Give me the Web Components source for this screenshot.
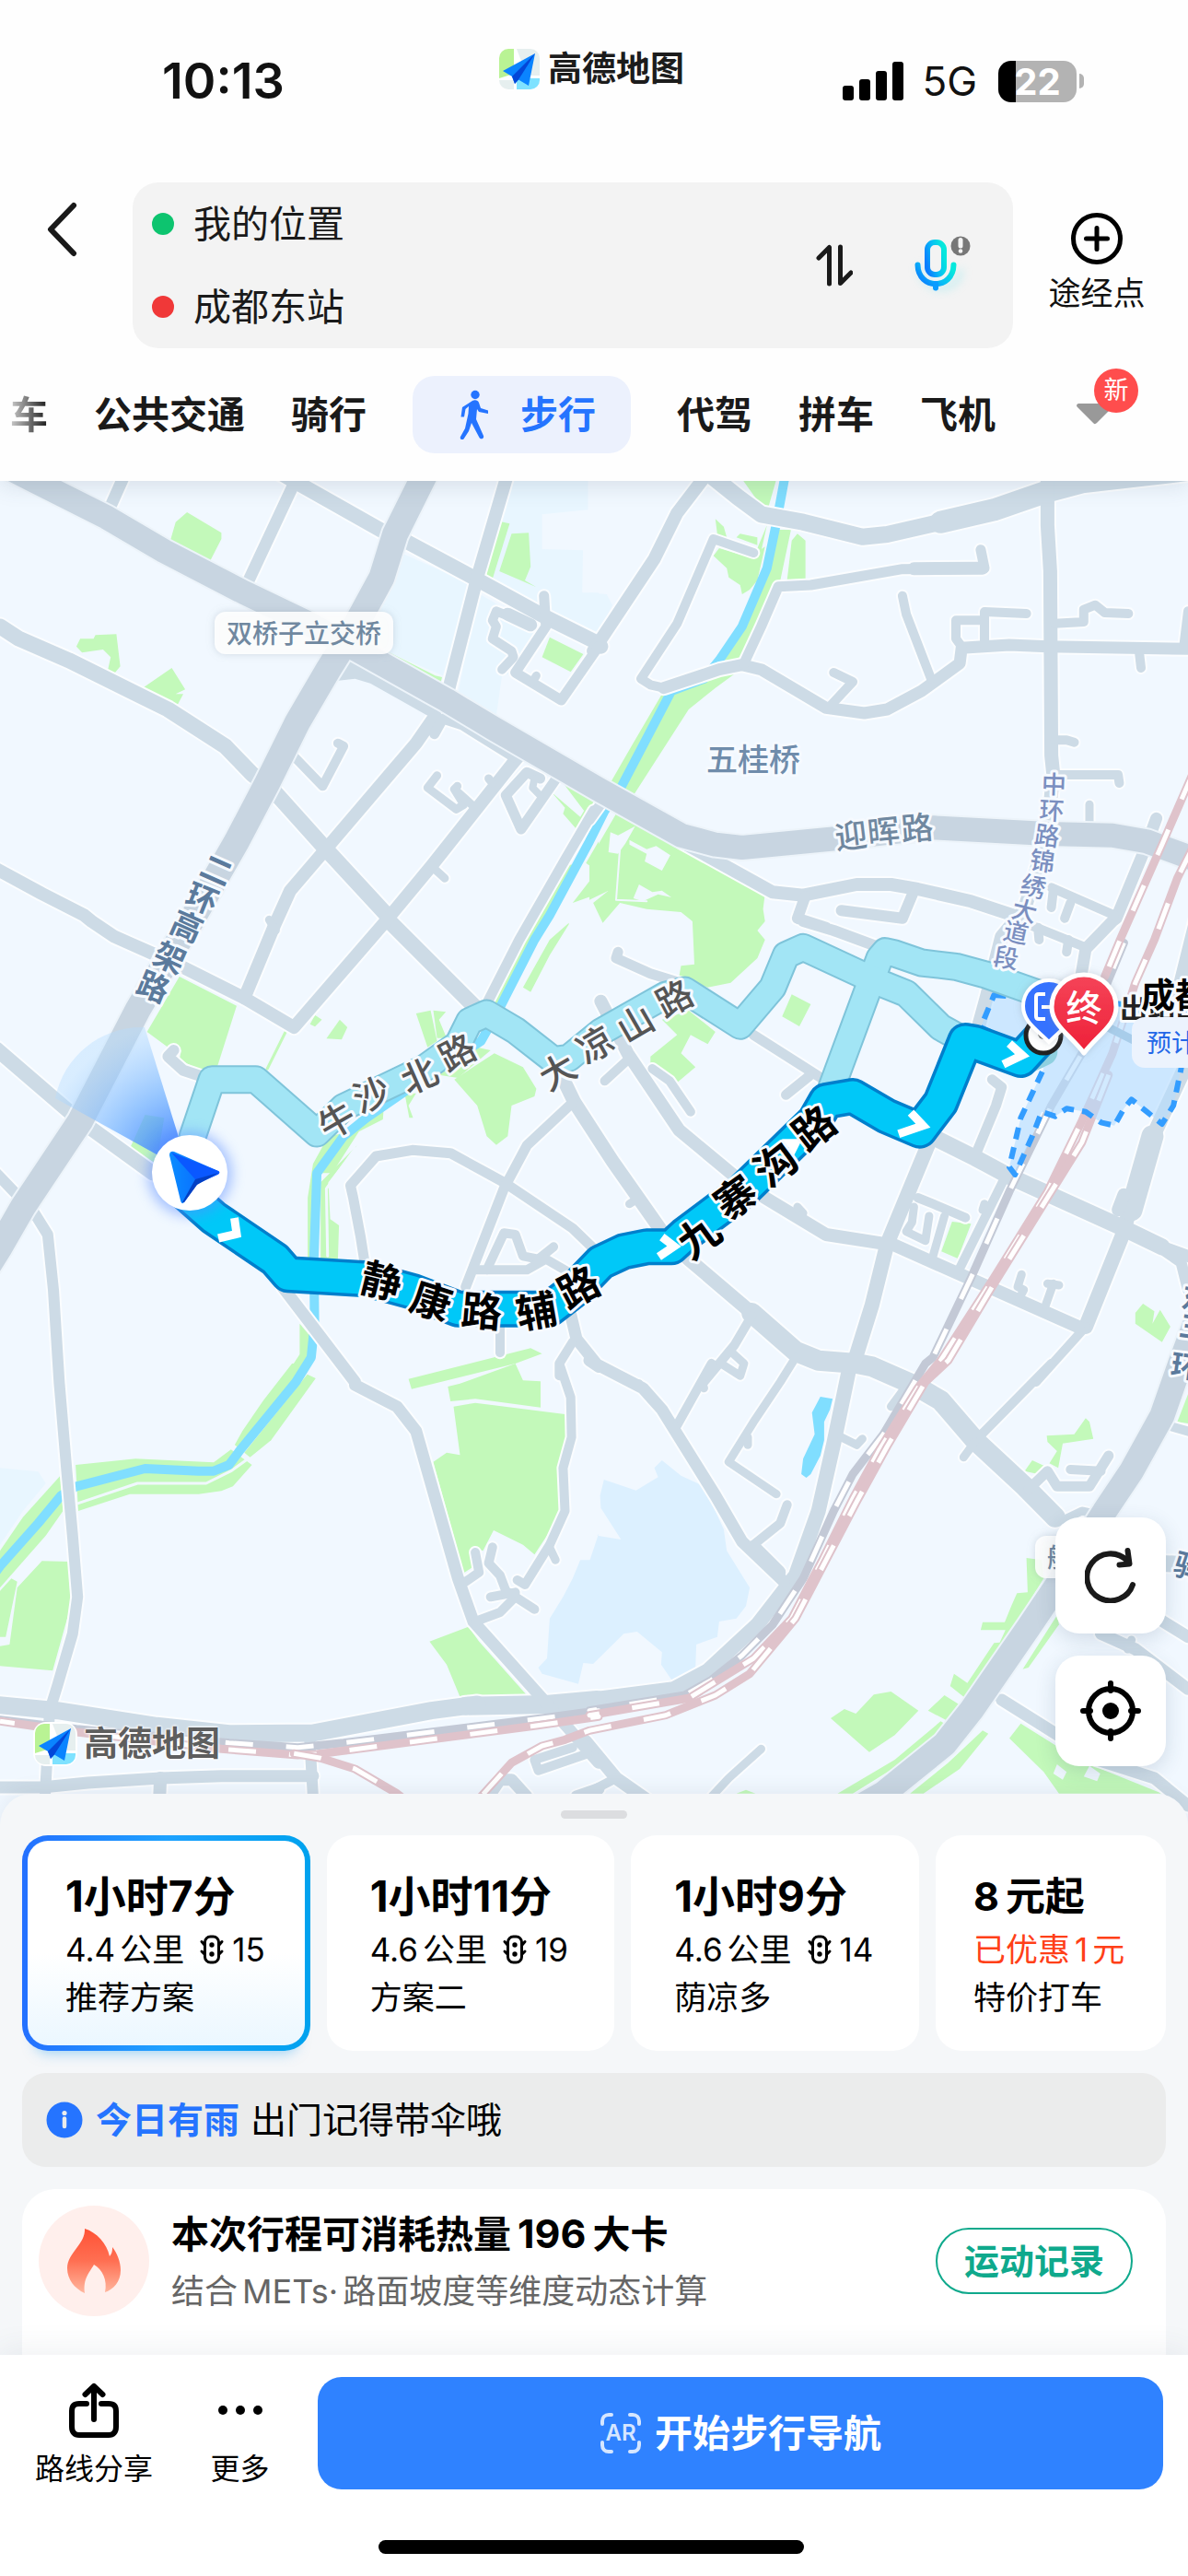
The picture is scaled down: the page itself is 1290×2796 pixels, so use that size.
<!DOCTYPE html>
<html lang="zh-CN">
<head>
<meta charset="utf-8">
<meta name="viewport" content="width=device-width, initial-scale=1">
<title>步行路线</title>
<style>
  html, body { margin: 0; }
  body {
    font-family: Inter, "Noto Sans CJK SC", sans-serif;
    color: #111;
    background: #fff;
  }
</style>
</head>
<body>
<route-page></route-page>

<script>
const BASE = `
  *, *::before, *::after { box-sizing: border-box; }
  button { font: inherit; color: inherit; background: none; border: 0; padding: 0; margin: 0; cursor: pointer; }
  svg { display: block; }
`;

class BaseElement extends HTMLElement {
  connectedCallback() {
    if (this.shadowRoot) return;
    const root = this.attachShadow({ mode: "open" });
    root.innerHTML = `<style>${BASE}${this.styles()}</style>${this.markup()}`;
  }
  styles() { return ":host{display:block}"; }
  markup() { return "<slot></slot>"; }
}

/* ---------- icons ---------- */
const ICONS = {
  back: [34, 60, `<path d="M30 4 5 30l25 26" fill="none" stroke="#1a1a1a" stroke-width="6" stroke-linecap="round" stroke-linejoin="round"/>`],
  swap: [40, 48, `<path d="M3 16 14.500 4.500V44M26.500 4v39.500L38 32" fill="none" stroke="#1a1a1a" stroke-width="5" stroke-linecap="round" stroke-linejoin="round"/>`],
  mic: [76, 76, `<defs><linearGradient id="m" x1="0" y1=".8" x2="1" y2=".3"><stop offset="0" stop-color="#0a7dff"/><stop offset=".5" stop-color="#08bdf5"/><stop offset="1" stop-color="#06e8dc"/></linearGradient>
      <filter id="b" x="-50%" y="-50%" width="200%" height="200%"><feGaussianBlur stdDeviation="5"/></filter></defs>
      <g fill="none" stroke="#9be8ee" stroke-width="6" opacity=".5" filter="url(#b)"><path d="M17 38c0 32 44 32 44 4"/></g>
      <g fill="none" stroke="url(#m)" stroke-width="6" stroke-linecap="round"><rect x="25" y="13" width="18" height="35" rx="8"/><path d="M14.500 37.500C15 65 53 65 53.500 37.500"/><path d="M34 58v4.500" stroke="#0a9cff"/></g>
      <circle cx="61" cy="17" r="10.500" fill="#777"/><path d="M61 10.500v6.500" stroke="#f3f3f3" stroke-width="5" stroke-linecap="round"/><circle cx="61" cy="22.500" r="2.300" fill="#f3f3f3"/>`],
  via: [56, 56, `<circle cx="28" cy="28" r="25.500" fill="none" stroke="#000" stroke-width="5"/><path d="M28 16.500v23M16.500 28h23" stroke="#000" stroke-width="5" stroke-linecap="round"/>`],
  walk: [34, 54, `<circle cx="18" cy="5.500" r="4.700" fill="#2574ff"/><path d="M15 12c3-1.500 6-.5 7 2l2 6 8 2.500v3.500l-10-2-2-3-1 11 8 18c1 3-3 4.500-4.500 2L14 36l-3 9-5.500 8.500C3.500 55.500 1 53.500 2 51l5-9 3.500-16 .500-8-3.500 3L6 29.500H2.500L4 19z" fill="#2574ff"/>`],
  caret: [42, 26, `<path d="M4 1h34c2.500 0 4 2 2 4L23 22c-1.500 1.500-3 1.500-4 0L2 5C0 3 1.500 1 4 1z" fill="#999"/>`],
  signal: [66, 42, `<rect x="0" y="26" width="12" height="16" rx="3"/><rect x="18" y="19" width="12" height="23" rx="3"/><rect x="36" y="10" width="12" height="32" rx="3"/><rect x="54" y="0" width="12" height="42" rx="3"/>`],
  light: [28, 32, `<rect x="6.500" y="2" width="15" height="28" rx="6" fill="none" stroke="#000" stroke-width="3"/><circle cx="14" cy="11" r="2.700"/><circle cx="14" cy="21" r="2.700"/><path d="M3 7.500 6 11M3 18 6 21M25 7.500 22 11M25 18 22 21" fill="none" stroke="#000" stroke-width="3" stroke-linecap="round"/>`],
  info: [40, 40, `<circle cx="20" cy="20" r="19.500" fill="#2574ff"/><circle cx="20" cy="12.500" r="2.600" fill="#ebecec"/><path d="M20 18.500v8.500" stroke="#ebecec" stroke-width="4.500" stroke-linecap="round"/>`],
  flame: [60, 72, `<defs><linearGradient id="f" x1="0" y1="0" x2="0" y2="1"><stop offset="0" stop-color="#ff5236"/><stop offset=".5" stop-color="#ff6f52"/><stop offset="1" stop-color="#ffb79f"/></linearGradient></defs><path d="M20 1c13 4 24 16 27 30 3-3 3-7 3-10 5 6 9 16 9 25 0 13-8 21-17 24 3-13-3-25-12-30-5 9-12 15-10 31C9 66 1 56 1 44 1 27 21 18 20 1z" fill="url(#f)"/>`],
  share: [56, 60, `<path d="M20 23h-8c-5 0-8 2-8 8v17c0 6 3 9 8 9h32c5 0 8-3 8-9V31c0-6-3-8-8-8h-8" fill="none" stroke="#000" stroke-width="6" stroke-linecap="round"/><path d="M28 40V5M18.500 13 28 4l9.500 9" fill="none" stroke="#000" stroke-width="6" stroke-linecap="round" stroke-linejoin="round"/>`],
  more: [52, 60, `<circle cx="7" cy="30" r="5"/><circle cx="26" cy="30" r="5"/><circle cx="45" cy="30" r="5"/>`],
  frame: [46, 46, `<path d="M3 13V10c0-4 3-7 7-7h3M33 3h3c4 0 7 3 7 7v3M43 33v3c0 4-3 7-7 7h-3M13 43h-3c-4 0-7-3-7-7v-3" fill="none" stroke="#d5e6ff" stroke-width="4" stroke-linecap="round"/>`],
  refresh: [56, 60, `<path d="M52 40A25.500 25.500 0 1 1 46 14" fill="none" stroke="#1a1a1a" stroke-width="6" stroke-linecap="round"/><path d="M46.500 3l2 14.500-11 1" fill="none" stroke="#1a1a1a" stroke-width="6" stroke-linecap="round" stroke-linejoin="round"/>`],
  locate: [68, 68, `<circle cx="34" cy="34" r="24" fill="none" stroke="#000" stroke-width="6"/><circle cx="34" cy="34" r="9"/><path d="M34 4v8M34 56v8M4 34h8M56 34h8" stroke="#000" stroke-width="6" stroke-linecap="round"/>`],
  brand: [44, 44, `<clipPath id="c"><rect width="44" height="44" rx="10"/></clipPath><g clip-path="url(#c)"><rect width="44" height="44" fill="#fff"/><path d="M0 0h16v27L0 32z" fill="#b9f394"/><path d="M19 0h25v29H30zM0 34h16v10H0z" fill="#e6efef"/><path d="M19 32h25v12H19z" fill="#7fe2ff"/></g><path d="M39 5 4 24l10 6 3 8 4-4.500L32 40z" fill="#0a84ff"/><path d="M39 5 14 30l3 8 4-4.500z" fill="#0347d8"/>`]
};

class UiIcon extends BaseElement {
  styles() { return ":host{display:block;flex:none}"; }
  markup() {
    const [w, h, body] = ICONS[this.getAttribute("name")];
    return `<svg width="${w}" height="${h}" viewBox="0 0 ${w} ${h}" aria-hidden="true">${body}</svg>`;
  }
}

class BrandLogo extends BaseElement {
  styles() {
    return `:host{display:flex;align-items:center;gap:9px;font-size:37px;line-height:44px;font-weight:700;color:#1c1c1c;white-space:nowrap}
      :host([muted]){color:#5e5e5e;text-shadow:0 0 3px #fff,0 0 3px #fff,0 0 3px #fff}
      :host([muted]) ui-icon{border-radius:12px;box-shadow:0 0 0 2px #fff}`;
  }
  markup() { return `<ui-icon name="brand"></ui-icon><span>高德地图</span>`; }
}

/* ---------- header ---------- */
class StatusBar extends BaseElement {
  styles() {
    return `:host{display:grid;grid-template-columns:1fr auto 1fr;align-items:center;height:70px;padding:0 113px 0 176px}
      time{font-size:54px;line-height:60px;font-weight:600}
      brand-logo{align-self:start;grid-column:2;margin-left:-68px}
      .right{display:flex;align-items:center;justify-content:flex-end;gap:23px}
      .right ui-icon{margin-right:-3px}
      .net{font-size:44px;line-height:60px}
      .cell{display:flex;align-items:center;gap:3px}
      .battery{width:85px;height:45px;border-radius:14px;background:linear-gradient(90deg,#000 19px,#b3b3b3 19px);color:#fff;font-size:40px;line-height:45px;font-weight:700;text-align:center}
      .nub{width:5px;height:16px;border-radius:0 5px 5px 0;background:#b3b3b3}`;
  }
  markup() {
    return `<time>10:13</time><brand-logo></brand-logo>
      <div class="right"><ui-icon name="signal"></ui-icon><span class="net">5G</span>
      <div class="cell"><div class="battery">22</div><div class="nub"></div></div></div>`;
  }
}

class SearchPanel extends BaseElement {
  styles() {
    return `:host{display:flex;align-items:flex-start}
      .back{width:144px;height:102px;padding-left:50px;display:flex;align-items:center;flex:none}
      .box{flex:1;min-width:0;height:180px;border-radius:28px;background:#f3f3f3;display:flex;align-items:center;padding:0 42px 0 21px}
      .rows{flex:1;min-width:0}
      label{display:flex;align-items:center;height:90px;gap:21px}
      i{width:24px;height:24px;border-radius:50%;background:#0dc46f;flex:none}
      i.end{background:#f03838}
      input{flex:1;min-width:0;border:0;background:none;padding:0;font:inherit;font-size:41px;line-height:60px;color:#1a1a1a;outline:0}
      .tools{display:flex;align-items:center;gap:56px}
      .via{width:190px;padding-right:8px;margin-top:33px;display:flex;flex-direction:column;align-items:center;gap:9px;font-size:35px;line-height:44px;flex:none}`;
  }
  markup() {
    return `<button class="back" aria-label="返回"><ui-icon name="back"></ui-icon></button>
      <div class="box"><div class="rows">
        <label><i></i><input aria-label="起点" value="我的位置"></label>
        <label><i class="end"></i><input aria-label="终点" value="成都东站"></label></div>
        <div class="tools"><button aria-label="交换起终点"><ui-icon name="swap"></ui-icon></button>
        <button aria-label="语音"><ui-icon name="mic"></ui-icon></button></div></div>
      <button class="via"><ui-icon name="via"></ui-icon><span>途经点</span></button>`;
  }
}

class ModeTab extends BaseElement {
  styles() {
    return `:host{display:block;flex:none}
      button{display:flex;align-items:center;height:84px;font-size:41px;line-height:60px;font-weight:600;color:#1a1a1a;white-space:nowrap}
      :host([cut]) button{background:linear-gradient(90deg,#ccc,#1a1a1a);background-clip:text;-webkit-background-clip:text;color:transparent}
      :host([active]) button{color:#2574ff;background:#ecf1fd;border-radius:24px;padding:0 38px 0 50px;gap:33px}`;
  }
  markup() {
    return `<button>${this.hasAttribute("active") ? '<ui-icon name="walk"></ui-icon>' : ""}<slot></slot></button>`;
  }
}

class ModeTabs extends BaseElement {
  styles() {
    return `:host{display:flex;align-items:center;justify-content:space-between;padding:0 58px 0 11px}
      nav{display:flex;gap:50px;min-width:0}
      .more{position:relative;width:64px;height:84px;display:flex;align-items:center;flex:none}
      .badge{position:absolute;left:20px;top:-8px;width:48px;height:48px;border-radius:50%;background:#ff4d4d;color:#fff;font-size:27px;line-height:48px;text-align:center}`;
  }
  markup() {
    return `<nav><mode-tab cut>车</mode-tab><mode-tab>公共交通</mode-tab><mode-tab>骑行</mode-tab><mode-tab active>步行</mode-tab><mode-tab>代驾</mode-tab><mode-tab>拼车</mode-tab><mode-tab>飞机</mode-tab></nav>
      <button class="more" aria-label="更多方式"><ui-icon name="caret"></ui-icon><span class="badge">新</span></button>`;
  }
}

class RouteHeader extends BaseElement {
  styles() {
    return `:host{display:block;position:relative;z-index:1;padding:53px 0 30px;background:#fefefe;box-shadow:0 4px 24px rgba(60,80,100,.16)}
      search-panel{margin-top:75px} mode-tabs{margin-top:30px}`;
  }
  markup() { return `<status-bar></status-bar><search-panel></search-panel><mode-tabs></mode-tabs>`; }
}

/* ---------- map ---------- */
/* Geometry is stored in tile units; a letter in a point list switches the tile. */
const TILES = { A: [0, 520], B: [640, 520], C: [0, 1000], D: [640, 1000], E: [0, 1480], F: [640, 1480] };
const UX = 650 / 1568, UY = 1 / 3;
function points(list) {
  let tile = TILES.A, x = null; const out = [];
  for (const t of list.trim().split(/[\s,]+/)) {
    if (TILES[t]) { tile = TILES[t]; continue; }
    if (x === null) x = +t;
    else { out.push([tile[0] + x * UX, tile[1] + t * UY]); x = null; }
  }
  return out;
}
const d = list => "M" + points(list).map(p => p.map(n => n.toFixed(1)).join(" ")).join("L");

const ROADS = [
  [17, "A 0 480 50 520 180 590 440 750 590 870 660 960 720 1020 850 1200 1010 1415 C 1020 0 1245 280"],
  [14, "A -20 1262 110 1350 220 1420 C 240 0 300 50 400 105 480 150 640 250 770 345 1010 0 A 1130 1260 1340 930 1360 900"],
  [14, "C 640 250 720 10 A 760 1340 850 1210 1090 860 1140 770"],
  [9, "A 705 1435 722 1470"],
  [13, "A 325 -10 280 115"], [13, "A 772 10 640 360"],
  [16, "A 720 -30 790 20 1010 175 1060 200 1240 320 1430 450 1568 535 B 30 545"],
  [14, "A 1328 -10 1250 320 1170 710"],
  [14, "B 310 -20 230 110 170 260 10 560"],
  [11, "A 1425 380 1430 480 1350 630 1470 720 1568 545"],
  [9, "A 1405 640 1395 660"],
  [10, "A 1330 445 1300 430 1290 460 1300 480 1290 520 1340 560 1345 580 1315 620"],
  [14, "A 1330 440 1390 475"],
  [10, "A 760 890 845 1000 900 870 885 860"],
  [9, "A 1145 965 1120 1005 1195 1075 1215 1060 1190 1010 1198 1000"], [9, "A 1200 1020 1240 1065"],
  [11, "A 1415 975 1380 955 1325 1030 1365 1140 1460 970"], [8, "A 1400 975 1395 1005 1415 1030"],
  [9, "A 1130 1260 1165 1300"], [9, "A 1280 975 1290 990"],
  [11, "A 1138 830 1160 780 1210 800 1345 905"],
  [11, "B 40 1040 0 1110 A 1555 1080 1480 1240 1360 1500 C 1270 280"],
  [18, "B 310 -20 390 60 450 115 560 140 715 188 780 180 920 140"],
  [24, "B 920 140 1060 100 1200 40 1290 10 1568 -30"],
  [15, "B 1200 0 1200 150 1207 300 1210 900 1215 960 1200 1150 1140 1400 D 1080 50 1040 250 1020 340"],
  [10, "B 430 240 325 195 230 470 135 650 160 670 195 680"],
  [13, "B 195 680 340 620 400 605 450 620 620 745 720 762 780 750 870 690 970 600 975 550 1100 540 1200 545 1568 553"],
  [10, "B 1556 553 1568 430"],
  [11, "B 405 600 450 480 495 350 580 345 820 293 1035 290 1025 230"], [14, "B 850 292 1030 290"],
  [10, "B 820 380 830 440 895 650"], [10, "B 640 630 690 660 630 740"],
  [10, "B 975 545 960 520 960 460 1035 460 1035 540"], [10, "B 1035 460 1035 432 1145 438"],
  [10, "B 1220 470 1295 465 1295 425 1325 410 1350 435 1412 438"],
  [10, "B 1440 560 1445 615"], [10, "B 1220 850 1250 850 1270 857"],
  [10, "B 1230 963 1385 963 1388 990"], [9, "B 1310 1060 1310 1130"],
  [13, "B 1485 1105 1460 1190 1380 1430 D 1370 0 1300 90 1285 200"],
  [14, "B 240 1180 480 1345 560 1355 700 1320 790 1320 860 1335 1000 1375 1110 1420"],
  [12, "B 850 1340 820 1430 660 1405"],
  [12, "B 565 1360 545 1430 620 1460 D 560 0 640 30 760 85"],
  [10, "B 1210 1330 1375 1420"], [10, "B 1260 1380 1245 1430"], [10, "B 1215 1340 1210 1395"],
  [10, "D 1160 15 1300 85"], [10, "D 1175 20 1178 60"], [10, "D 1255 60 1250 100"],
  [16, "D 1590 0 1540 250 1570 450 1480 690 1410 960 1400 1010 1300 1320"],
  [24, "D 1475 700 1420 940"], [14, "D 1400 890 1385 940"],
  [10, "D 1300 1320 1170 1500 F 1210 0 1020 240"],
  [18, "D 880 690 1010 770 1100 830 1400 1000 1500 1060"], [13, "D 1500 1060 1590 1100"],
  [12, "D 1480 1050 1550 1110 1568 1200"],
  [16, "D 890 720 780 1050 740 1250 690 1450 F 680 20 640 260 600 480 540 690 440 850 310 1000 220 1060 0 1095"],
  [20, "F 20 1095 E 1430 1110 1220 1115"],
  [19, "E 1250 1110 1130 1130 820 1203 600 1205 410 1180 150 1130 -20 1110"],
  [10, "D 1090 830 970 1130"], [9, "D 1035 920 1030 940"],
  [11, "D 430 370 620 520"], [11, "D 575 505 515 565"], [9, "D 545 930 560 950"],
  [14, "D 30 260 100 430 235 680 390 840 460 900 620 1020 800 1055 1280 1320"],
  [10, "D 110 440 40 520"], [10, "D 165 480 210 520 265 620"], [9, "D 105 920 130 900"],
  [15, "C 1470 500 1505 590 D 60 780 190 1010 260 1100 430 1280"],
  [22, "D 425 1275 540 1400 600 1430 700 1440 F 740 10 850 70 920 120 1010 250 1140 400 1220 500"],
  [10, "D 860 900 900 920 985 965"], [9, "D 850 930 845 980 830 1010 880 1040 890 960"], [9, "D 930 960 900 1090"],
  [11, "D 1055 515 1080 540 1065 600 1015 750"],
  [9, "D 1132 1150 1122 1190 1138 1200 1125 1230"], [9, "D 1200 1180 1230 1185"], [9, "D 1215 1180 1195 1250"],
  [11, "D 75 100 70 120 160 170 250 205"],
  [10, "D 425 1285 380 1380 300 1500 F 320 0 230 200"], [9, "D 370 1400 405 1440 395 1480 345 1440"],
  [9, "D 540 1420 500 1500 F 430 190 365 320 490 425"], [9, "F 415 240 415 265"], [9, "F 130 65 135 80"], [9, "F 300 80 295 60"],
  [13, "C 1495 1280 1510 1360 1568 1450 F 0 -10 140 80 190 150 230 230 330 430 400 580 510 710"],
  [10, "F 518 460 500 520 430 590"], [16, "F 430 600 495 680"],
  [9, "F 820 90 790 140"], [9, "F 660 240 700 265 715 245"], [9, "F 1010 255 980 305"],
  [11, "F 1150 410 1200 350 1225 400 1310 400 1360 300"], [10, "F 1260 345 1340 350"],
  [13, "F 1340 880 1430 930 1568 1060"], [9, "F 1420 900 1410 930"], [13, "F 1490 830 1568 890"],
  [13, "F 1080 1095 1330 1290 1480 1350 1568 1440"], [10, "F 1510 200 1580 225"],
  [9, "F 1240 510 1290 480 1330 490"], [18, "F 1490 650 1568 655"],
  [9, "F 450 1255 365 1350 320 1410"], [14, "F -10 1230 70 1350 150 1420"], [10, "F 70 1350 0 1395"],
  [12, "C -10 820 90 950 125 1020 140 1200 155 1500 E 175 350 190 560 203 760 190 880 150 1050 130 1130 118 1410"],
  [16, "C -10 415 200 640 400 820"],
  [13, "C 740 1190 930 1500 E 930 70 1040 140 1090 220 1200 700 1240 840 1420 1090 1568 1300"],
  [11, "C 955 1110 945 1030 925 900 918 860 985 765 1080 745 1180 755 1320 850 1500 1000 1550 1060"],
  [11, "C 1500 590 1380 730 1320 870 1220 1190"],
  [10, "C 1275 1135 1320 1015 1350 1020 1370 1090 1410 1100 1450 1060"],
  [10, "C 1240 1135 1380 1135 1430 1100 1500 1150"],
  [10, "C 1310 1310 1310 1405"],
  [10, "C 1500 1370 1465 1440 1465 1480 E 1465 0 1495 110 1497 240 1475 340 1480 480 1440 590 1375 720 1355 705"],
  [9, "E 1440 600 1455 640"],
  [12, "C 455 420 440 440 480 485 540 510"],
  [10, "E 1220 710 1255 680 1245 615"], [10, "E 1245 840 1310 810 1350 760 1325 740 1310 690 1280 650 1290 598"],
  [10, "E 1350 760 1400 800"], [10, "E 1285 760 1350 745"],
  [13, "E -10 1380 110 1380 230 1365 420 1350 580 1343 820 1343"], [12, "E 810 1200 820 1410"], [14, "E 420 1350 418 1410"],
  [10, "E 1500 1250 1400 1290 1410 1325 1540 1270"], [13, "E 1280 1410 1310 1355 1340 1355 1380 1410"], [13, "E 1510 1410 1568 1385"]
];
const MAJOR = [
  [26, "A -60 -90 80 0 280 125 430 235 640 370 800 465 940 560 1170 720 1290 810 1568 1010 B 240 1160 330 1190 400 1200 650 1170 900 1135 1200 1155 1370 1160 1460 1180 1590 1240"],
  [28, "A 1115 -20 1035 180 1000 320 930 480 860 620 780 790 700 990 620 1180 500 1440 C 450 100 360 290 210 650 60 930 0 1060 -40 1140"],
  [27, "D 1590 1300 F 1548 0 1500 170 1420 350 1350 480 1280 620 1150 860 1000 1130 930 1240 770 1400 700 1450"]
];
const ZONES = [
  "A 1340 0 1540 0 1540 100 1420 115 1420 228 1527 232 1525 370 1568 370 1568 520 1250 310",
  "A 1050 240 1230 340 1160 640 1010 560 960 440", "A 1250 370 1430 500 1350 630 1315 640 1300 770 1200 700",
  "B 0 370 45 375 60 410 20 510 0 500", "E 0 340 100 352 120 390 60 480 0 590"
];
const LAKES = ["F 190 315 240 365 300 400 352 540 360 610 420 730 410 790 385 830 340 840 335 890 280 915 278 990 218 1035 188 980 190 940 125 873 90 880 10 978 E 1528 975 1515 1043 1420 1010 1410 990 1433 960 1440 830 1475 760 1500 700 1520 640 1545 640 1568 555 F 20 560 83 573 30 470 28 430 38 378 122 413 180 370 170 340"];
const POND = "F 605 108 637 115 630 150 615 190 615 250 605 300 580 360 568 372 555 360 560 310 590 230 583 160";
const GREENS = [
  "A 460 140 490 108 580 175 580 195 545 280 520 260 445 205", "A 200 545 210 520 245 520 250 508 305 505 315 610 298 635 282 625 290 580 270 555 215 565",
  "A 450 615 485 685 460 700 480 700 465 735 440 720 372 682", "A 1310 138 1335 145 1290 325 1272 315", "A 1340 178 1385 175 1390 285 1375 330 1405 352 1308 300",
  "A 1005 555 1140 640 1158 645 1150 685 1025 600", "A 1440 515 1528 570 1495 628 1420 580", "A 1470 982 1555 1040 1510 1140 1475 1090 1480 1070 1445 1020 1520 1100 1530 1080",
  "A 1480 1260 1500 1255 1395 1500 1375 1500", "C 1400 0 1420 0 1310 270 1290 270", "A 1568 1180 1535 1250 1568 1280", "A 1550 1300 1500 1380 1568 1350",
  "A 1490 1445 1440 1500 C 1440 60 1370 215 1390 230 1440 110 1490 10",
  "B 400 0 490 0 468 95 440 70", "B 330 130 352 155 360 190 335 180", "B 385 190 395 178 440 190 440 215",
  "B 465 150 440 225 450 235", "B 325 250 340 225 420 255 460 220 440 330 420 360 400 375 395 345 365 320 360 290",
  "B 490 165 528 165 500 330 480 350 400 590 340 590 440 390", "B 545 178 566 200 566 325 518 328 530 200",
  "B 385 630 330 680 260 750 110 1040 50 1000 110 870 190 700 290 660", "B 0 1040 15 1040 0 1080",
  "B 70 1090 100 1105 130 1130 300 1240 460 1350 455 1400 460 1440 440 1470 D 460 60 440 120 370 200 310 215 235 180 240 145 275 140 270 0 B 270 1440 240 1410 150 1400 80 1380 35 1445 10 1380 50 1340 0 1370 0 1240",
  "C 470 180 620 275 570 470 530 490 470 450 475 420 440 410 385 360", "C 380 630 430 640 410 790 340 740", "C 825 305 843 320 825 343 812 335", "C 890 320 910 345 895 385 855 382",
  "C 1090 300 1128 290 1145 390 1120 410", "C 1135 290 1168 295 1150 320 1170 380 1145 380",
  "C 1295 430 1370 475 1405 545 1400 570 1340 600 1330 700 1300 728 1275 700 1250 600 1190 515", "C 1150 500 1250 410 1285 420 1200 510",
  "C 940 640 1005 610 1003 645 940 685 870 820 840 820", "C 935 730 860 850 865 970 888 990 885 1100 840 1100 840 850", "C 860 700 900 690 835 810 820 1100 806 1100 806 900 820 790",
  "C 1060 560 1090 560 1070 600 1082 640 1072 640", "C 785 1310 812 1350 812 1420 760 1500 738 1500 785 1410",
  "D 190 320 260 290 330 360 310 400 265 370 240 430 278 475 230 525 160 480 160 440 230 370", "D 530 238 580 270 550 342 505 310", "D 950 978 1000 985 965 1098 922 1075",
  "D 1450 1245 1480 1270 1475 1310 1495 1265 1522 1320 1500 1370 1430 1310 1430 1275",
  "E 765 0 800 0 630 280 615 265 635 220 690 120", "E 805 35 827 48 710 250 655 305 640 290", "E 198 330 355 310 560 322 605 280 660 330 610 400 580 415 520 425 340 425 205 480",
  "E 158 365 165 480 120 560 0 730 0 610 60 500", "E 110 643 180 645 185 790 138 1000 0 985 0 920 25 915 45 730", "E 0 740 30 700 45 710 15 890 0 890",
  "C 1070 1490 1390 1390 1420 1408 1350 1440 E 1078 83", "E 1173 75 1205 65 1350 0 1370 55 1416 58 1416 143 1245 115 1180 123",
  "E 1188 140 1245 128 1480 165 1485 240 1463 350 1470 490 1400 622 1370 590 1293 543 1265 610 1245 600 1235 665 1215 682 1135 320 1170 290 1205 298",
  "E 1227 857 1255 905 1380 1080 1208 1095 1170 980 1125 905",
  "F 1300 178 1310 190 1320 245 1240 260 1228 340 1205 325 1225 285 1200 255 1198 235 1270 230", "F 1160 315 1195 335 1175 360 1140 350", "F 1130 365 1160 385 1150 395",
  "F 1145 633 1185 640 1190 700 1145 790 1000 1080 985 1090 945 1050 955 1010 990 1040 1060 910 1075 908 1090 868 1025 868 1030 842 1088 842 1105 790 1120 748 1148 745",
  "F 790 1068 862 1130 800 1210 733 1265 632 1155 668 1125 698 1140 745 1078", "F 930 1080 975 1115 940 1165 887 1130",
  "F 920 1165 940 1180 820 1300 690 1400 650 1400 800 1290", "F 1030 1195 1045 1205 970 1320 875 1400 840 1400 940 1300",
  "F 1130 1172 1230 1250 1340 1320 1500 1400 1230 1400 1190 1330 1100 1220", "F 1225 820 1230 850 1150 990 1135 995", "F 1568 100 1540 190 1568 195", "F 385 1400 410 1388 435 1400"
];
const CLEARINGS = ["B 175 1195 212 1225 190 1275 145 1245 150 1220 105 1190 105 1175 150 1205", "B 55 1150 75 1160 120 1130 95 1185 75 1220 50 1215", "B 130 1320 165 1345 190 1340 215 1362 180 1352 140 1375 115 1365", "F 1225 1305 1250 1330 1240 1355 1215 1335", "F 1310 1310 1338 1335 1330 1360 1295 1345"];
const RIVER = "B 514 -20 487 160 465 290 400 480 340 590 300 650 215 690 80 1010 40 1080 0 1180 A 1440 1420 1400 1500 C 1310 280 1260 390 1100 520 960 640 900 700 830 820 822 1100 824 1310 815 1420 775 1500 E 630 280 600 330 560 350 520 350 380 342 200 400 160 430 100 520 0 660 -30 710";
const RAILS = [
  ["#c3c9d6", "#fff", "D 1400 70 1350 220 1290 430 1210 600 1100 880 1000 1160 900 1420 F 880 0 770 230 690 360 640 480 560 700 480 850 400 950 320 1030 250 1080 0 1130 E 1568 1130 1420 1155 900 1235 780 1250 600 1235 200 1190 0 1160"],
  ["#dfc3cb", "#fff", "B 1580 960 1500 1190 1390 1500 D 1350 180"],
  ["#dfc3cb", "#fff", "B 1580 1200 1540 1300 1480 1500 D 1430 200 1370 430 1290 650 1200 880 1060 1160 920 1430 F 860 80 760 280 690 440 610 640 530 830 430 960 260 1090 0 1145 E 1568 1150 1400 1180 830 1272 780 1275 580 1255 200 1200 0 1165"],
  ["#dfc3cb", "#fff", "D 1360 500 1290 720 1200 900 1060 1180 940 1430 F 880 60 780 270 700 450 620 640 540 830 420 1010 330 1080 200 1145 0 1195 E 1480 1225 1420 1245 1340 1300 1260 1410"],
  ["#dfc3cb", "#fff", "E 770 1270 840 1285 930 1320 1040 1400 1060 1420"]
];
const STATION = "D 1060 240 1170 250 1400 270 1440 290 1568 300 1550 480 1530 600 1500 660 1460 620 1420 580 1400 610 1375 665 1340 655 1300 620 1250 610 1220 635 1185 620 1160 700 1115 825 1100 800 1130 640 1190 480 1150 420 1025 345";
const ALTS = [
  "D 635 540 760 120 775 98 800 105 870 135 960 148 1040 175 1200 245",
  "C 505 700 555 515 670 515 830 690 900 605 1110 480 1200 400 1230 325 1275 300 1350 355 1450 452 1490 445 D 30 360 200 240 250 225 395 340 480 215 515 110 560 85 760 200 830 235 920 345 1000 400"
];
const ROUTE = "C 455 850 560 965 720 1100 755 1150 960 1165 1080 1205 1200 1262 1440 1262 1500 1205 D 30 1110 90 1075 150 1060 215 1060 250 1020 400 880 590 650 620 585 690 570 780 635 865 680 920 590 985 390 1010 395 1130 450 1185 375";
const ARROWS = ["C 614 966 620 1018 572 1032", "D 190 1028 222 1058 182 1092", "D 1100 398 1134 436 1084 466", "D 842 623 874 665 810 692", "D 505 722 540 722 525 760"];
/* label: font size, colour, weight, text, then centre x, y (tile units) and angle per glyph */
const LABELS = [
  [34, "#5b7a9c", 600, "二环高架路", [["A", 568, 1272, 24], ["A", 530, 1365, 22], ["A", 490, 1455, 24], ["C", 445, 118, 24], ["C", 402, 212, 22]]],
  [35, "#7088a0", 500, "迎晖路", [["B", 685, 1160, -7], ["B", 770, 1146, -6], ["B", 858, 1135, -5]]],
  [27, "#7b8fc0", 500, "中环路锦绣大道段", [["B", 1217, 993, 2], ["B", 1211, 1078, 3], ["B", 1199, 1160, 8], ["B", 1187, 1243, 8], ["B", 1163, 1325, 14], ["B", 1140, 1405, 14], ["B", 1118, 1475, 12], ["D", 1092, 118, 10]]],
  [39, "#555", 500, "牛沙北路", [["C", 882, 648, -30], ["C", 972, 562, -22], ["C", 1098, 502, -24], ["C", 1197, 426, -28]]],
  [39, "#555", 500, "大凉山路", [["C", 1460, 488, -30], ["D", 15, 400, -30], ["D", 120, 332, -30], ["D", 222, 250, -28]]],
  [44, "#000", 700, "静康路辅路", [["C", 1000, 1170, 14], ["C", 1130, 1235, 18], ["C", 1262, 1268, 5], ["C", 1405, 1268, -10], ["C", 1515, 1190, -28]]],
  [45, "#000", 700, "九寨沟路", [["D", 286, 1025, -36], ["D", 382, 898, -36], ["D", 487, 790, -38], ["D", 588, 672, -38]]],
  [32, "#5b7a9c", 600, "东三环", [["D", 1590, 1228, 10], ["D", 1584, 1320, 8], ["F", 1562, 8, 8]]],
  [32, "#5b7a9c", 600, "驿", [["F", 1570, 660, 14]]]
];
function label([size, color, weight, text, glyphs]) {
  const xs = [], ys = [], rs = [];
  for (const [tile, gx, gy, a] of glyphs) {
    const [cx, cy] = points(`${tile} ${gx} ${gy}`)[0], r = a * Math.PI / 180;
    xs.push((cx - .5 * size * Math.cos(r) - .38 * size * Math.sin(r)).toFixed(1));
    ys.push((cy - .5 * size * Math.sin(r) + .38 * size * Math.cos(r)).toFixed(1));
    rs.push(a);
  }
  return `<text class="halo" font-size="${size}" fill="${color}" font-weight="${weight}" x="${xs.join(" ")}" y="${ys.join(" ")}" rotate="${rs.join(" ")}">${text}</text>`;
}

class RouteMap extends BaseElement {
  styles() {
    return `:host{display:block;position:relative;overflow:hidden;background:#f1f8ff;min-height:900px}
      .canvas{position:absolute;inset:0;width:100%;height:100%}
      .halo{paint-order:stroke;stroke:#f6faff;stroke-width:6px;stroke-linejoin:round}
      .tools{position:absolute;right:24px;bottom:66px;display:flex;flex-direction:column;gap:24px}
      .tools button{width:120px;height:120px;border-radius:26px;background:#fff;display:grid;place-items:center;box-shadow:0 6px 22px rgba(40,70,100,.16)}
      .tools button:first-child{height:126px}
      brand-logo{position:absolute;left:38px;bottom:68px}`;
  }
  markup() {
    const line = (list, w, c, extra = "") => `<path d="${d(list)}" fill="none" stroke="${c}" stroke-width="${w}" ${extra}/>`;
    const area = (list, c, extra = "") => `<path d="${d(list)}Z" fill="${c}" ${extra}/>`;
    const land = ZONES.map(z => area(z, "#e8f6ff")).join("") + LAKES.map(z => area(z, "#dcf0ff")).join("") +
      GREENS.map(z => area(z, "#c3f9ba")).join("") + CLEARINGS.map(z => area(z, "#f1f8ff")).join("") +
      line("E 205 455 360 390 540 390 605 350 650 310", 3, "#f1f8ff") + line("C 748 360 700 480", 3, "#c3f9ba") +
      line("C 858 1090 855 870 930 740", 3, "#f1f8ff") + line("B 80 1200 70 1370 150 1375", 2, "#f1f8ff") +
      line(RIVER, 10, "#80deff") + area(POND, "#80deff");
    const roads = ROADS.map(([w, l]) => line(l, w + 4, "#fbfdff")).join("") + ROADS.map(([w, l]) => line(l, w, "#cddbe6")).join("") +
      area("A 860 660 930 650 970 665 1120 770 1190 720 940 550", "#cddbe6");
    const major = MAJOR.map(([w, l]) => line(l, w + 4, "#edf4fa")).join("") + MAJOR.map(([w, l]) => line(l, w, "#c8d5e1")).join("");
    const rails = RAILS.map(([c, w, l]) => line(l, 9, c) + line(l, 5, w, 'stroke-dasharray="30 36" stroke-linecap="butt"')).join("");
    return `<svg class="canvas" viewBox="0 522 1290 1461" preserveAspectRatio="xMidYMin slice" role="img" aria-label="路线地图">
      <defs>
        <radialGradient id="cone" gradientUnits="userSpaceOnUse" cx="206" cy="1273" r="165"><stop offset=".2" stop-color="#3c82ff" stop-opacity=".9"/><stop offset=".55" stop-color="#6fb0ff" stop-opacity=".7"/><stop offset="1" stop-color="#b4dcff" stop-opacity=".4"/></radialGradient>
        <filter id="glow" x="-60%" y="-60%" width="220%" height="220%"><feGaussianBlur stdDeviation="7"/></filter>
        <filter id="soft" x="-20%" y="-40%" width="140%" height="180%"><feDropShadow dx="0" dy="0" stdDeviation="4" flood-color="#8090a0" flood-opacity=".35"/></filter>
        <linearGradient id="arrow" x1="0" y1="0" x2="1" y2="0"><stop offset="0" stop-color="#0a8cff"/><stop offset="1" stop-color="#0a5cff"/></linearGradient>
        <linearGradient id="end" x1="0" y1="0" x2="0" y2="1"><stop offset="0" stop-color="#f54458"/><stop offset="1" stop-color="#ee2038"/></linearGradient>
      </defs>
      <g stroke-linejoin="round" stroke-linecap="round">
        ${land}${roads}${major}${rails}
        ${area(STATION, "#b4dcff", 'fill-opacity=".6" stroke="#339dff" stroke-width="6" stroke-linecap="butt" stroke-dasharray="13 9"')}
        ${line("D 1350 340 1430 390", 9, "#a8cdea")}
        ${ALTS.map(l => line(l, 31, "#7fc4da")).join("")}${ALTS.map(l => line(l, 27, "#a2e5f5")).join("")}
        ${line("D 1130 460 1190 425", 30, "#8fd0e0")}
        ${line(ROUTE, 40, "#007fcc")}${line(ROUTE, 33, "#00c8f8")}
      </g>
      <g fill="none" stroke="#fff" stroke-width="9" stroke-linejoin="miter">${ARROWS.map(l => `<path d="${d(l)}"/>`).join("")}</g>
      <path d="M206 1273 157 1115C112 1113 69 1145 60 1192z" fill="url(#cone)"/>
      <circle cx="206" cy="1274" r="46" fill="#5a8cff" opacity=".5" filter="url(#glow)"/>
      <circle cx="206" cy="1273" r="41" fill="#fff"/>
      <path d="M189 1250 237 1271Q240 1273 236 1275L214 1285 200 1305Q197 1308 196 1303L184 1254Q184 1249 189 1250z" fill="url(#arrow)"/>
      <path d="M186 1251 212 1280 214 1285 236 1275Q240 1273 237 1271z" fill="#0a58ff"/>
      <path d="M212 1280 214 1286 200 1305 198 1305zM212 1280 237 1273 214 1286z" fill="#0340c4"/>

      <rect x="233" y="664" width="194" height="46" rx="12" fill="#fff" fill-opacity=".88" filter="url(#soft)"/>
      <text x="330" y="698" font-size="28" font-weight="500" fill="#7088a0" text-anchor="middle">双桥子立交桥</text>
      <rect x="1124" y="1667" width="90" height="46" rx="12" fill="#fff" fill-opacity=".88" filter="url(#soft)"/>
      <text x="1137" y="1701" font-size="28" font-weight="500" fill="#7088a0">航</text>
      <text class="halo" x="767" y="837" font-size="34" font-weight="500" fill="#6f8cab">五桂桥</text>
      ${LABELS.map(label).join("")}

      <circle cx="1133" cy="1124" r="19" fill="#fff" stroke="#222" stroke-width="5"/>
      <circle cx="1133" cy="1122" r="6" fill="#777"/>
      <path d="M1139 1131C1128 1119 1111 1110 1111 1092a28 28 0 0 1 56 0c0 18-17 27-28 39z" fill="#3572ff" stroke="#fff" stroke-width="4" filter="url(#soft)"/>
      <path d="M1135 1079h-7q-3 0-3 3v21q0 3 3 3h7M1131 1093h10" fill="none" stroke="#fff" stroke-width="4"/>
      <text class="halo" x="1216" y="1105" font-size="30" font-weight="700" fill="#222">出站口</text>
      <text class="halo" x="1239" y="1094" font-size="37" font-weight="700" fill="#000">成都东站</text>
      <rect x="1229" y="1104" width="120" height="55" rx="14" fill="#ecf3fd"/>
      <text x="1245" y="1142" font-size="27" fill="#2468e8">预计</text>
      <path d="M1177 1143C1163 1124 1142 1113 1142 1093a35 35 0 0 1 70 0c0 20-21 31-35 50z" fill="url(#end)" stroke="#fff" stroke-width="5" stroke-linejoin="round" filter="url(#soft)"/>
      <text x="1177" y="1108" font-size="39" font-weight="500" fill="#fff" text-anchor="middle">终</text>
    </svg>
    <brand-logo muted></brand-logo>
    <div class="tools"><button aria-label="刷新"><ui-icon name="refresh"></ui-icon></button><button aria-label="定位"><ui-icon name="locate"></ui-icon></button></div>`;
  }
}

/* ---------- bottom sheet ---------- */
class PlanCard extends BaseElement {
  styles() {
    return `:host{display:block;flex:5 1 0;min-width:0}
      :host([narrow]){flex-grow:4}
      button{display:block;width:100%;height:234px;padding:34px 0 32px 47px;border-radius:28px;background:#fff;text-align:left;color:#000;white-space:nowrap}
      :host([narrow]) button{padding-left:41px}
      :host([selected]) button{border:6px solid transparent;padding:28px 0 26px 41px;
        background:linear-gradient(180deg,#fff 55%,#ebf7ff) padding-box,linear-gradient(90deg,#2470ff,#1ea2ff 50%,#00a2ee) border-box;
        box-shadow:0 16px 14px -14px rgba(60,170,240,.5)}
      .title{display:block;font-size:46px;line-height:64px;font-weight:700}
      :host([narrow]) .title{font-size:43px}
      .line{display:flex;align-items:center;font-size:35px;line-height:52px}`;
  }
  markup() {
    return `<button><span class="title"><slot name="title"></slot></span><span class="line"><slot name="detail"></slot></span><span class="line"><slot></slot></span></button>`;
  }
}

class PlanDetail extends BaseElement {
  styles() { return `:host{display:flex;align-items:center} .km{margin-left:5px} ui-icon{margin:0 8px 0 16px}`; }
  markup() {
    return `<span>${this.getAttribute("distance")}</span><span class="km">公里</span><ui-icon name="light"></ui-icon><span>${this.getAttribute("lights")}</span>`;
  }
}

class TipBanner extends BaseElement {
  styles() {
    return `:host{display:flex;align-items:center;height:102px;padding:0 26px;border-radius:26px;background:#ebecec;font-size:39px;line-height:60px;color:#000}
      b{font-weight:600;color:#2574ff;margin:0 12px 0 14px}`;
  }
  markup() { return `<ui-icon name="info"></ui-icon><b><slot name="lead"></slot></b><slot></slot>`; }
}

class CalorieCard extends BaseElement {
  styles() {
    return `:host{display:flex;align-items:flex-start;height:180px;padding:18px 36px 0 18px;border-radius:36px 36px 0 0;background:#fff}
      .disc{width:120px;height:120px;border-radius:50%;background:#ffefec;display:grid;place-items:center;flex:none}
      .text{flex:1;min-width:0;margin-left:24px}
      h2{margin:0;font-size:41px;line-height:62px;font-weight:700;color:#000}
      p{margin:0;font-size:36px;line-height:62px;color:#666}
      .num{margin:0 7px;font-size:43px;line-height:60px}
      .unit{margin:0 5px}
      button{height:72px;margin-top:24px;padding:0 29px;border:2px solid #0fa98c;border-radius:36px;color:#0fa98c;font-size:38px;line-height:60px;font-weight:600;flex:none}`;
  }
  markup() {
    return `<div class="disc"><ui-icon name="flame"></ui-icon></div>
      <div class="text"><h2>本次行程可消耗热量<span class="num">196</span>大卡</h2><p>结合<span class="unit">METs·</span>路面坡度等维度动态计算</p></div>
      <button>运动记录</button>`;
  }
}

class RouteSheet extends BaseElement {
  styles() {
    return `:host{display:block;position:relative;margin-top:-36px;padding:18px 24px 0;border-radius:34px 34px 0 0;background:#f5f7f9;box-shadow:0 -4px 20px rgba(60,80,100,.08)}
      .grip{width:72px;height:9px;margin:0 auto 18px;border-radius:5px;background:#dcdde0}
      .plans{display:flex;gap:18px}
      tip-banner,calorie-card{margin-top:24px}
      .off{color:#ff4018} .n{margin:0 5px} .p{margin-right:7px}`;
  }
  markup() {
    return `<div class="grip"></div>
      <div class="plans">
        <plan-card selected><span slot="title">1小时7分</span><plan-detail slot="detail" distance="4.4" lights="15"></plan-detail>推荐方案</plan-card>
        <plan-card><span slot="title">1小时11分</span><plan-detail slot="detail" distance="4.6" lights="19"></plan-detail>方案二</plan-card>
        <plan-card><span slot="title">1小时9分</span><plan-detail slot="detail" distance="4.6" lights="14"></plan-detail>荫凉多</plan-card>
        <plan-card narrow><span slot="title"><span class="p">8</span>元起</span><span slot="detail" class="off">已优惠<span class="n">1</span>元</span>特价打车</plan-card>
      </div>
      <tip-banner><span slot="lead">今日有雨</span>出门记得带伞哦</tip-banner>
      <calorie-card></calorie-card>`;
  }
}

class ActionBar extends BaseElement {
  styles() {
    return `:host{display:block;position:relative;background:#fff;padding:24px 27px 24px 20px;box-shadow:0 -6px 30px rgba(60,80,100,.08)}
      .row{display:flex;align-items:flex-start}
      .side{display:flex;flex-direction:column;align-items:center;gap:12px;padding-top:6px;width:164px;font-size:32px;line-height:44px;color:#000;flex:none}
      .side.more{width:153px}
      .go{flex:1;height:122px;margin-left:8px;border-radius:26px;background:#2f82ff;color:#fff;display:flex;align-items:center;justify-content:center;gap:14px;font-size:41px;line-height:60px;font-weight:600}
      .ar{display:grid;place-items:center;color:#d5e6ff;font-size:24px;line-height:46px;font-weight:600}
      .ar > *{grid-area:1/1}
      .home{width:462px;height:15px;border-radius:8px;background:#000;margin:55px auto 0}`;
  }
  markup() {
    return `<div class="row"><button class="side"><ui-icon name="share"></ui-icon><span>路线分享</span></button>
      <button class="side more"><ui-icon name="more"></ui-icon><span>更多</span></button>
      <button class="go"><span class="ar"><ui-icon name="frame"></ui-icon><span>AR</span></span><span>开始步行导航</span></button></div>
      <div class="home"></div>`;
  }
}

class RoutePage extends BaseElement {
  styles() { return `:host{display:flex;flex-direction:column;min-height:100vh;overflow:hidden} route-map{flex:1 0 0}`; }
  markup() { return `<route-header></route-header><route-map></route-map><route-sheet></route-sheet><action-bar></action-bar>`; }
}

for (const [name, cls] of Object.entries({
  "ui-icon": UiIcon, "brand-logo": BrandLogo, "status-bar": StatusBar, "search-panel": SearchPanel, "mode-tab": ModeTab,
  "mode-tabs": ModeTabs, "route-header": RouteHeader, "route-map": RouteMap, "plan-card": PlanCard, "plan-detail": PlanDetail,
  "tip-banner": TipBanner, "calorie-card": CalorieCard, "route-sheet": RouteSheet, "action-bar": ActionBar, "route-page": RoutePage
})) customElements.define(name, cls);
</script>
</body>
</html>
